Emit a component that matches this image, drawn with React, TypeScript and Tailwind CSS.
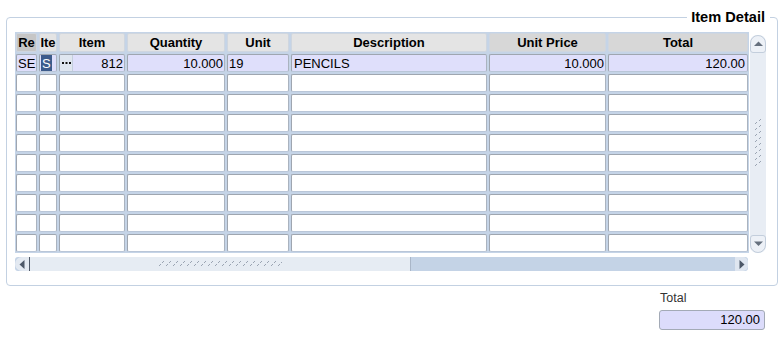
import React from "react";

const cols = ["Re", "Ite", "Item", "Quantity", "Unit", "Description", "Unit Price", "Total"];
const headBg = ["bg-[#c6c6c6]", "bg-[#e4e4e4]", "bg-[#e4e4e4]", "bg-[#e4e4e4]", "bg-[#e4e4e4]", "bg-[#e4e4e4]", "bg-[#d7d7d7]", "bg-[#d7d7d7]"];

const cellBase =
  "rounded-[2px] border border-t-[#9fa6b0] border-l-[#9fa6b0] border-r-[#aab3bf] border-b-[#b9c6d8] overflow-hidden";

function Grip({ vertical }: { vertical?: boolean }) {
  const items = [];
  const n = vertical ? 8 : 18;
  for (let i = 0; i < n; i++) {
    if (vertical) {
      items.push(<line key={"a" + i} x1={1} y1={i * 6 + 5} x2={3} y2={i * 6 + 3} stroke="#9aa4b2" strokeWidth={1} />);
      items.push(<line key={"b" + i} x1={5} y1={i * 6 + 2} x2={7} y2={i * 6} stroke="#9aa4b2" strokeWidth={1} />);
    } else {
      items.push(<line key={"a" + i} x1={i * 7 + 1} y1={5} x2={i * 7 + 3} y2={3} stroke="#9aa4b2" strokeWidth={1} />);
      items.push(<line key={"b" + i} x1={i * 7 + 4} y1={2} x2={i * 7 + 6} y2={0} stroke="#9aa4b2" strokeWidth={1} />);
    }
  }
  return vertical ? (
    <svg width={8} height={50} className="block">{items}</svg>
  ) : (
    <svg width={124} height={6} className="block">{items}</svg>
  );
}

export default function App() {
  const rows = Array.from({ length: 10 }, (_, i) => i);
  return (
    <div
      className="w-[783px] h-[342px] bg-white text-black pt-[17px]"
      style={{ fontFamily: '"Liberation Sans", Arial, sans-serif' }}
    >
      <div className="relative ml-[6px] w-[772px] h-[269px] border border-[#c3d1e2] rounded-[4px] pl-[8px] pt-[14px]">
        <div className="absolute right-[7px] top-[-10px] h-[18px] bg-white pl-[4px] pr-[5px] text-[14.6px] font-bold leading-[18px]">
          Item Detail
        </div>
        <div className="flex gap-[1px]">
          <div className="grid grid-cols-[21px_18px_66px_98px_62px_196px_117px_140px] grid-rows-[19px_repeat(10,18px)] gap-[2px] p-[1px] bg-[#c5d4e7] text-[13px] leading-[15px]">
            {cols.map((c, i) => (
              <div
                key={c}
                className={`${headBg[i]} rounded-[2px] border border-[#cfd6df] flex items-center justify-center font-bold overflow-hidden whitespace-nowrap`}
              >
                {c}
              </div>
            ))}
            {/* row 1 */}
            <div className={`${cellBase} bg-[#dfdffb] flex items-center pl-[1px] whitespace-nowrap`}>SE</div>
            <div className={`${cellBase} bg-[#dfdffb] flex items-stretch pl-[1px] py-[0px]`}>
              <span className="bg-[#3d5b8b] text-white px-[1px] flex items-center">S</span>
            </div>
            <div className={`${cellBase} bg-[#dfdffb] flex items-center`}>
              <span className="w-[13px] h-full bg-[#dfe6f0] border-r border-[#c4cfdd] flex items-center justify-center">
                <svg width={9} height={3} className="block">
                  <rect x={0} y={0} width={2} height={2} fill="#111" />
                  <rect x={3.5} y={0} width={2} height={2} fill="#111" />
                  <rect x={7} y={0} width={2} height={2} fill="#111" />
                </svg>
              </span>
              <span className="flex-1 text-right pr-[1px]">812</span>
            </div>
            <div className={`${cellBase} bg-[#dfdffb] flex items-center justify-end pr-[1px]`}>10.000</div>
            <div className={`${cellBase} bg-[#dfdffb] flex items-center pl-[1px]`}>19</div>
            <div className={`${cellBase} bg-[#dfdffb] flex items-center pl-[2px]`}>PENCILS</div>
            <div className={`${cellBase} bg-[#dfdffb] flex items-center justify-end pr-[1px]`}>10.000</div>
            <div className={`${cellBase} bg-[#dfdffb] flex items-center justify-end pr-[2px]`}>120.00</div>
            {rows.slice(1).map((r) =>
              cols.map((c) => <div key={r + c} className={`${cellBase} bg-white`} />)
            )}
          </div>
          {/* vertical scrollbar */}
          <div className="mt-[3px] w-[16px] h-[218px] bg-[#e8edf4] rounded-[7px] flex flex-col items-center justify-between">
            <div className="w-[16px] h-[18px] rounded-t-[8px] rounded-b-[3px] border border-[#c3cedc] bg-[#edf1f7] flex items-center justify-center">
              <svg width={9} height={6}>
                <polygon points="0,5 9,5 4.5,0.5" fill="#66707e" />
              </svg>
            </div>
            <Grip vertical />
            <div className="w-[16px] h-[18px] rounded-b-[8px] rounded-t-[3px] border border-[#c3cedc] bg-[#edf1f7] flex items-center justify-center">
              <svg width={9} height={6}>
                <polygon points="0,0.5 9,0.5 4.5,5" fill="#66707e" />
              </svg>
            </div>
          </div>
        </div>
        {/* horizontal scrollbar */}
        <div className="mt-[4px] w-[733px] h-[14px] flex bg-[#c4d3e6] rounded-[3px]">
          <div className="w-[14px] h-full bg-[#e3e9f1] rounded-l-[7px] flex items-center justify-center">
            <svg width={6} height={9}>
              <polygon points="5.5,0 5.5,9 0.5,4.5" fill="#4d5868" />
            </svg>
          </div>
          <div className="w-[382px] h-full bg-[#e6ecf3] border-l border-[#4f5968] border-r border-r-[#a9b6c8] flex items-center justify-center">
            <Grip />
          </div>
          <div className="flex-1" />
          <div className="w-[13px] h-full bg-[#dfe6f0] rounded-r-[5px] flex items-center justify-center">
            <svg width={6} height={9}>
              <polygon points="0.5,0 0.5,9 5.5,4.5" fill="#4d5868" />
            </svg>
          </div>
        </div>
      </div>
      <div className="flex justify-end pr-[18px] mt-[5px]">
        <div className="w-[106px] flex flex-col">
          <div className="text-[12.5px] leading-[14px] text-[#333] pl-[1px]">Total</div>
          <div className="mt-[5px] h-[20px] bg-[#dcdcfb] border border-[#a3aab6] rounded-[3px] text-[13px] flex items-center justify-end pr-[4px]">
            120.00
          </div>
        </div>
      </div>
    </div>
  );
}
